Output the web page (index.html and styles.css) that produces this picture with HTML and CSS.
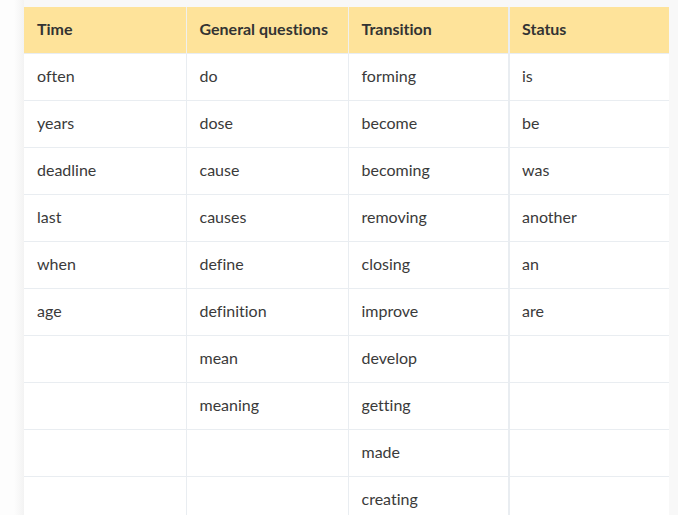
FILE: index.html
```html
<!DOCTYPE html>
<html>
<head>
<meta charset="utf-8">
<link rel="stylesheet" href="styles.css">
</head>
<body>
<div class="page">
<table class="grid">
<thead>
<tr><th>Time</th><th>General questions</th><th>Transition</th><th>Status</th></tr>
</thead>
<tbody>
<tr><td>often</td><td>do</td><td>forming</td><td>is</td></tr>
<tr><td>years</td><td>dose</td><td>become</td><td>be</td></tr>
<tr><td>deadline</td><td>cause</td><td>becoming</td><td>was</td></tr>
<tr><td>last</td><td>causes</td><td>removing</td><td>another</td></tr>
<tr><td>when</td><td>define</td><td>closing</td><td>an</td></tr>
<tr><td>age</td><td>definition</td><td>improve</td><td>are</td></tr>
<tr><td></td><td>mean</td><td>develop</td><td></td></tr>
<tr><td></td><td>meaning</td><td>getting</td><td></td></tr>
<tr><td></td><td></td><td>made</td><td></td></tr>
<tr><td></td><td></td><td>creating</td><td></td></tr>
<tr><td></td><td></td><td></td><td></td></tr>
</tbody>
</table>
</div>
</body>
</html>
```
FILE: styles.css
```css
html, body {
  margin: 0;
  padding: 0;
}
body {
  background: linear-gradient(to right, #fdfdfd 0, #fdfdfd 14px, #f3f3f3 24px, #f8f8f8 24px);
  font-family: "Lato", "Open Sans", sans-serif;
  font-variant-ligatures: none;
  overflow: hidden;
  height: 515px;
}
.page {
  padding: 7px 9px 0 24px;
}
.grid {
  border-collapse: collapse;
  width: 645px;
  table-layout: fixed;
  background: #fff;
}
.grid th:nth-child(1), .grid td:nth-child(1) { width: 162px; }
.grid th:nth-child(2), .grid td:nth-child(2) { width: 162px; }
.grid th:nth-child(3), .grid td:nth-child(3) { width: 161px; }
.grid th:nth-child(4), .grid td:nth-child(4) { width: 160px; }
.grid th {
  background: #fee39a;
  height: 46px;
  padding: 0 0 2px 13px;
  text-align: left;
  font-weight: 700;
  font-size: 16px;
  color: #333;
  border-left: 1px solid #f0f0ee;
  box-sizing: border-box;
}
.grid td {
  height: 47px;
  padding: 0 0 2px 13px;
  font-size: 16px;
  color: #3a3a3a;
  border-top: 1px solid #e9edf1;
  border-left: 1px solid #e9edf1;
  box-sizing: border-box;
}
.grid th:first-child, .grid td:first-child {
  border-left: none;
}
.grid th:nth-child(4), .grid td:nth-child(4) {
  border-left: 2px solid #e9edf1;
  padding-left: 12px;
}
```
